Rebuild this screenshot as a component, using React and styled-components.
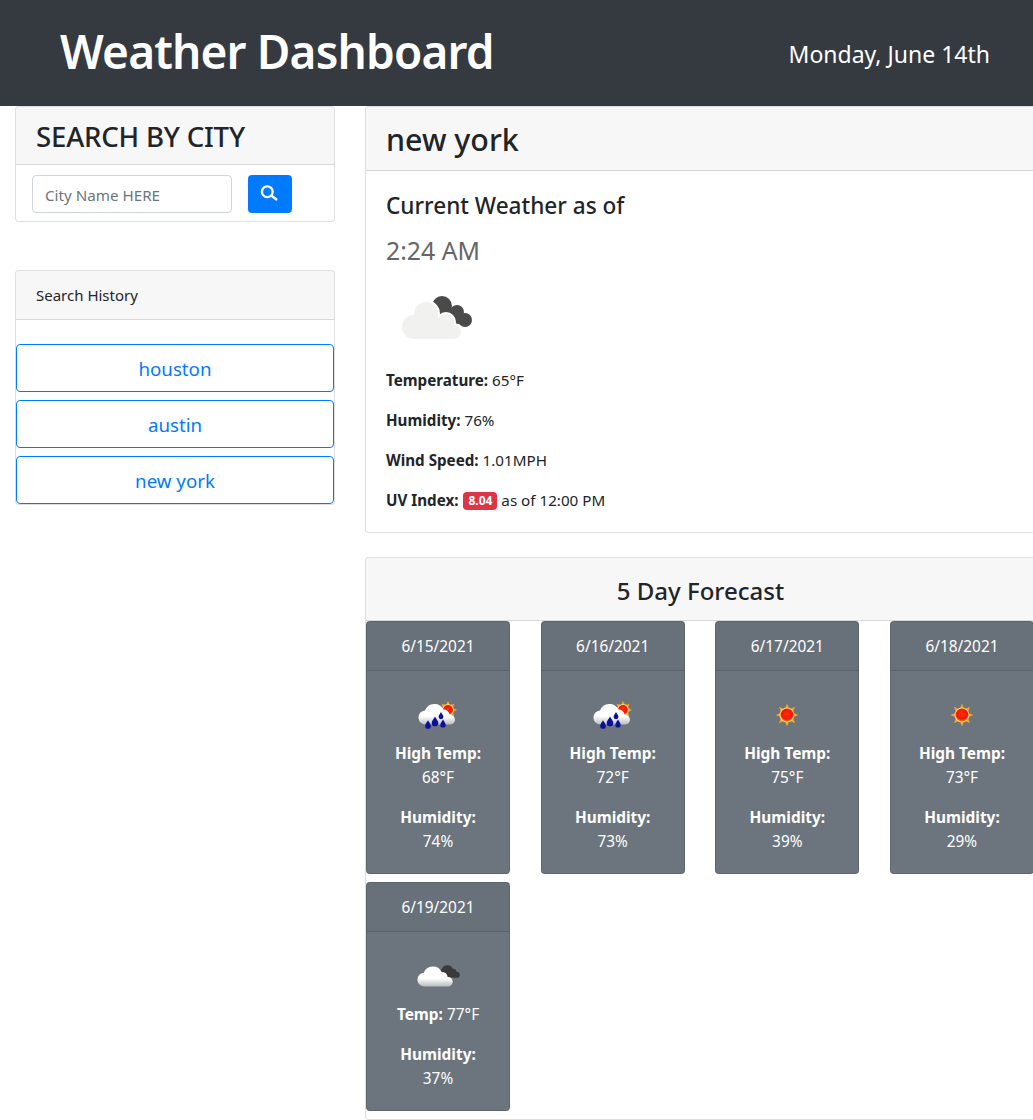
import React from "react";
import styled, { createGlobalStyle } from "styled-components";

const GlobalStyle = createGlobalStyle`
  html, body {
    margin: 0;
    height: 1120px;
    overflow: hidden;
    background: #fff;
  }
  body {
    font-family: "Noto Sans", "Open Sans", sans-serif;
    font-size: 16px;
    line-height: 24px;
    color: #212529;
  }
  * { box-sizing: border-box; }
`;

const Header = styled.header`
  height: 106px;
  background: #343a40;
  color: #fff;
  display: flex;
  align-items: center;
  justify-content: space-between;
  padding: 0 43px 4px 60px;
`;

const Title = styled.h1`
  margin: 0;
  font-size: 46px;
  font-weight: 600;
  line-height: 56px;
  letter-spacing: -0.85px;
`;

const Today = styled.div`
  font-size: 23px;
  padding-top: 6px;
`;

const Page = styled.div`
  display: grid;
  grid-template-columns: 320px 671px;
  column-gap: 30px;
  padding-left: 15px;
  width: 1100px;
  align-items: start;
`;

const Side = styled.aside`
  display: flex;
  flex-direction: column;
  gap: 48px;
`;

const Main = styled.main`
  display: flex;
  flex-direction: column;
  gap: 24px;
`;

const Card = styled.section`
  border: 1px solid rgba(0, 0, 0, 0.125);
  border-radius: 4px;
  background: #fff;
  overflow: hidden;
`;

const CardHead = styled.div`
  background: rgba(0, 0, 0, 0.03);
  border-bottom: 1px solid rgba(0, 0, 0, 0.125);
  padding: 0 20px;
  height: ${(p) => p.$h}px;
  display: flex;
  align-items: center;
  justify-content: ${(p) => (p.$center ? "center" : "flex-start")};
`;

const SearchTitle = styled.h3`
  margin: 0;
  padding-top: 1px;
  font-size: 27.6px;
  font-weight: 500;
  line-height: 32px;
  letter-spacing: -0.2px;
`;

const SearchRow = styled.form`
  display: flex;
  gap: 16px;
  padding: 10px 16px 8px;
`;

const CityInput = styled.input`
  width: 200px;
  height: 38px;
  padding: 7px 12px 5px;
  border: 1px solid #ced4da;
  border-radius: 4px;
  font: inherit;
  font-size: 15.2px;
  color: #495057;
  &::placeholder {
    color: #6c757d;
    opacity: 1;
  }
`;

const SearchButton = styled.button`
  width: 44px;
  height: 38px;
  border: 0;
  border-radius: 4px;
  background: #007bff;
  color: #fff;
  display: flex;
  align-items: center;
  justify-content: center;
  padding: 0;
`;

const HistoryLabel = styled.span`
  font-size: 15px;
`;

const HistoryList = styled.div`
  display: flex;
  flex-direction: column;
  gap: 8px;
  padding-top: 24px;
`;

const HistoryButton = styled.button`
  height: 48px;
  border: 1px solid #007bff;
  border-radius: 4px;
  background: #fff;
  color: #007bff;
  font: inherit;
  font-size: 18.7px;
  padding: 2px 0 0;
`;

const CityName = styled.h2`
  margin: 0;
  padding-top: 3px;
  font-size: 30.4px;
  font-weight: 500;
  line-height: 36px;
`;

const WeatherBody = styled.div`
  padding: 20px;
`;

const AsOf = styled.h4`
  margin: 0 0 16px;
  font-size: 22.6px;
  font-weight: 500;
  line-height: 29px;
`;

const Time = styled.h5`
  margin: 0;
  font-size: 24.8px;
  font-weight: 400;
  line-height: 29px;
  color: #666;
`;

const BigIcon = styled.div`
  height: 103px;
  padding-top: 19px;
`;

const Stat = styled.p`
  margin: 0 0 16px;
  font-size: 15.2px;
  &:last-child { margin-bottom: 0; }
`;

const Badge = styled.span`
  display: inline-block;
  background: #dc3545;
  color: #fff;
  font-size: 12px;
  font-weight: 700;
  line-height: 12px;
  padding: 3px 5px;
  margin-left: 1px;
  border-radius: 4px;
  vertical-align: 1px;
`;

const ForecastTitle = styled.h4`
  margin: 0;
  padding-top: 2px;
  font-size: 24px;
  font-weight: 500;
  line-height: 29px;
`;

const ForecastGrid = styled.div`
  display: grid;
  grid-template-columns: repeat(4, 144px);
  column-gap: 30.67px;
  row-gap: 8px;
  padding-bottom: 8px;
`;

const DayCard = styled.div`
  background: #6c757d;
  color: #fff;
  border: 1px solid rgba(0, 0, 0, 0.125);
  border-radius: 4px;
  height: ${(p) => p.$h}px;
  text-align: center;
  font-size: 15.4px;
`;

const DayDate = styled.div`
  height: 49px;
  line-height: 50px;
  background: rgba(0, 0, 0, 0.03);
  border-bottom: 1px solid rgba(0, 0, 0, 0.125);
`;

const DayBody = styled.div`
  padding-top: 30px;
`;

const DayIcon = styled.div`
  height: 41px;
  display: flex;
  justify-content: center;
`;

const DayLine = styled.div`
  margin-bottom: ${(p) => (p.$gap ? 16 : 0)}px;
`;

const SearchIcon = () => (
  <svg width="20" height="20" viewBox="0 0 20 20" fill="none" stroke="#fff">
    <circle cx="7.300" cy="7.700" r="5.400" strokeWidth="2.300" />
    <path d="M11.500 11.800 L16.200 15.300" strokeWidth="2.600" strokeLinecap="round" />
  </svg>
);

const Cloud = ({ fill, x = 0, y = 0, s = 1 }) => (
  <path
    transform={`translate(${x} ${y}) scale(${s})`}
    fill={fill}
    d="M9 24a8 8 0 0 1 -1 -16 a11.500 11.500 0 0 1 21 -1 a7 7 0 0 1 7 6 a5.500 5.500 0 0 1 1 11 z"
  />
);

const CloudShade = () => (
  <defs>
    <linearGradient id="cloudShade" x1="0" y1="0" x2="0" y2="1">
      <stop offset="0" stopColor="#fff" />
      <stop offset="0.6" stopColor="#fff" />
      <stop offset="1" stopColor="#b9bcc0" />
    </linearGradient>
    <radialGradient id="sunCore" cx="0.5" cy="0.4" r="0.6">
      <stop offset="0" stopColor="#ff2a00" />
      <stop offset="0.7" stopColor="#f01808" />
      <stop offset="1" stopColor="#ff8a00" />
    </radialGradient>
  </defs>
);

const BigCloudIcon = () => (
  <svg width="88" height="60" viewBox="0 0 88 60">
    <g fill="#4a4a4a">
      <circle cx="56" cy="22" r="10" />
      <circle cx="71" cy="28" r="7" />
      <circle cx="79" cy="36" r="7" />
      <rect x="52" y="24" width="24" height="16" />
    </g>
    <g fill="#fff" stroke="#fff" strokeWidth="4">
      <circle cx="28" cy="43" r="12" />
      <circle cx="40" cy="30" r="12" />
      <circle cx="60" cy="38" r="8" />
      <circle cx="68" cy="48" r="7" />
    </g>
    <g fill="#f1f1f0">
      <circle cx="28" cy="43" r="12" />
      <circle cx="40" cy="30" r="12" />
      <circle cx="60" cy="38" r="8" />
      <circle cx="68" cy="48" r="7" />
      <rect x="28" y="34" width="40" height="21" />
    </g>
  </svg>
);

const Sun = ({ cx, cy, r, rays }) => (
  <g>
    {Array.from({ length: 8 }, (_, i) => (
      <polygon
        key={i}
        fill="#f5a623"
        points={`${cx - 2},${cy - r} ${cx + 2},${cy - r} ${cx},${cy - r - rays}`}
        transform={`rotate(${i * 45} ${cx} ${cy})`}
      />
    ))}
    <circle cx={cx} cy={cy} r={r + 1} fill="#ffd27a" />
    <circle cx={cx} cy={cy} r={r} fill="url(#sunCore)" />
  </g>
);

const Drop = ({ x, y, s = 1 }) => (
  <path
    transform={`translate(${x} ${y}) scale(${s})`}
    fill="#0a0f9c"
    d="M0 -5 C1 -3 3 -1 3 1 a3 3 0 0 1 -6 0 C-3 -1 -1 -3 0 -5 z"
  />
);

const RainSunIcon = () => (
  <svg width="40" height="34" viewBox="0 0 40 34">
    <CloudShade />
    <Sun cx={30} cy={9} r={5} rays={4} />
    <Cloud fill="url(#cloudShade)" x={0} y={2.4} s={0.88} />
    <Drop x={10} y={24} s={0.95} />
    <Drop x={17} y={21} s={1.1} />
    <Drop x={23} y={15} s={0.8} />
    <Drop x={25} y={23} s={0.9} />
  </svg>
);

const SunIcon = () => (
  <svg width="40" height="34" viewBox="0 0 40 34">
    <CloudShade />
    <Sun cx={20} cy={14} r={6.500} rays={5} />
  </svg>
);

const CloudsIcon = () => (
  <svg width="46" height="34" viewBox="0 0 46 34">
    <CloudShade />
    <Cloud fill="#3a3a3a" x={22.5} y={3} s={0.53} />
    <Cloud fill="url(#cloudShade)" x={2} y={4} s={0.85} />
  </svg>
);

const days = [
  { date: "6/15/2021", icon: <RainSunIcon />, high: "68°F", hum: "74%" },
  { date: "6/16/2021", icon: <RainSunIcon />, high: "72°F", hum: "73%" },
  { date: "6/17/2021", icon: <SunIcon />, high: "75°F", hum: "39%" },
  { date: "6/18/2021", icon: <SunIcon />, high: "73°F", hum: "29%" },
];

const App = () => {
  return (
    <>
      <GlobalStyle />
      <Header>
        <Title>Weather Dashboard</Title>
        <Today>Monday, June 14th</Today>
      </Header>
      <Page>
        <Side>
          <Card>
            <CardHead $h={58}>
              <SearchTitle>SEARCH BY CITY</SearchTitle>
            </CardHead>
            <SearchRow>
              <CityInput placeholder="City Name HERE" />
              <SearchButton type="button" aria-label="Search">
                <SearchIcon />
              </SearchButton>
            </SearchRow>
          </Card>
          <Card>
            <CardHead $h={49}>
              <HistoryLabel>Search History</HistoryLabel>
            </CardHead>
            <HistoryList>
              <HistoryButton>houston</HistoryButton>
              <HistoryButton>austin</HistoryButton>
              <HistoryButton>new york</HistoryButton>
            </HistoryList>
          </Card>
        </Side>
        <Main>
          <Card>
            <CardHead $h={64}>
              <CityName>new york</CityName>
            </CardHead>
            <WeatherBody>
              <AsOf>Current Weather as of</AsOf>
              <Time>2:24 AM</Time>
              <BigIcon>
                <BigCloudIcon />
              </BigIcon>
              <Stat><b>Temperature:</b> 65°F</Stat>
              <Stat><b>Humidity:</b> 76%</Stat>
              <Stat><b>Wind Speed:</b> 1.01MPH</Stat>
              <Stat><b>UV Index:</b> <Badge>8.04</Badge> as of 12:00 PM</Stat>
            </WeatherBody>
          </Card>
          <Card>
            <CardHead $h={63} $center>
              <ForecastTitle>5 Day Forecast</ForecastTitle>
            </CardHead>
            <ForecastGrid>
              {days.map((d) => (
                <DayCard key={d.date} $h={253}>
                  <DayDate>{d.date}</DayDate>
                  <DayBody>
                    <DayIcon>{d.icon}</DayIcon>
                    <DayLine><b>High Temp:</b></DayLine>
                    <DayLine $gap>{d.high}</DayLine>
                    <DayLine><b>Humidity:</b></DayLine>
                    <DayLine>{d.hum}</DayLine>
                  </DayBody>
                </DayCard>
              ))}
              <DayCard $h={229}>
                <DayDate>6/19/2021</DayDate>
                <DayBody>
                  <DayIcon><CloudsIcon /></DayIcon>
                  <DayLine $gap><b>Temp:</b> 77°F</DayLine>
                  <DayLine><b>Humidity:</b></DayLine>
                  <DayLine>37%</DayLine>
                </DayBody>
              </DayCard>
            </ForecastGrid>
          </Card>
        </Main>
      </Page>
    </>
  );
};

export default App;
